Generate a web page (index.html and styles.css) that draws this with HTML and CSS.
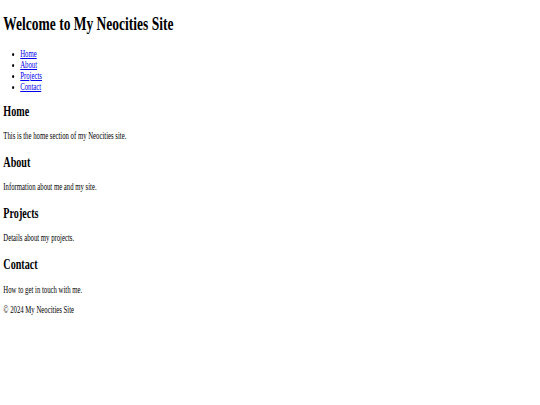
FILE: index.html
```html
<!DOCTYPE html>
<html lang="en">
<head>
<meta charset="utf-8">
<title>My Neocities Site</title>
<link rel="stylesheet" href="styles.css">
</head>
<body>
<div class="page">
  <header>
    <h1>Welcome to My Neocities Site</h1>
    <nav>
      <ul>
        <li><a href="#home">Home</a></li>
        <li><a href="#about">About</a></li>
        <li><a href="#projects">Projects</a></li>
        <li><a href="#contact">Contact</a></li>
      </ul>
    </nav>
  </header>
  <main>
    <section id="home">
      <h2>Home</h2>
      <p>This is the home section of my Neocities site.</p>
    </section>
    <section id="about">
      <h2>About</h2>
      <p>Information about me and my site.</p>
    </section>
    <section id="projects">
      <h2>Projects</h2>
      <p>Details about my projects.</p>
    </section>
    <section id="contact">
      <h2>Contact</h2>
      <p>How to get in touch with me.</p>
    </section>
  </main>
  <footer>
    <p>&copy; 2024 My Neocities Site</p>
  </footer>
</div>
</body>
</html>
```

FILE: styles.css
```css
html, body {
  margin: 0;
  padding: 0;
  overflow: hidden;
  background: #ffffff;
}

/* vertical metrics are scaled via font-size; horizontal squeeze via scaleX */
.page {
  display: flow-root;
  width: 480px;
  padding: 0 0.5em 0.5em;
  font-family: "Liberation Serif", "Times New Roman", serif;
  font-size: 9.525px;
  line-height: 1.15;
  color: #000000;
  transform: scaleX(0.7087);
  transform-origin: 0 0;
}

.page h1 {
  font-size: 2em;
  margin: 0.67em 0;
  white-space: nowrap;
}

.page h2 {
  font-size: 1.5em;
  margin: 0.83em 0;
}

.page p {
  margin: 1em 0;
}

.page ul {
  margin: 1.55em 0 -2px;
  padding-left: 2.5em;
}

.page a {
  color: #0000ee;
}
```
